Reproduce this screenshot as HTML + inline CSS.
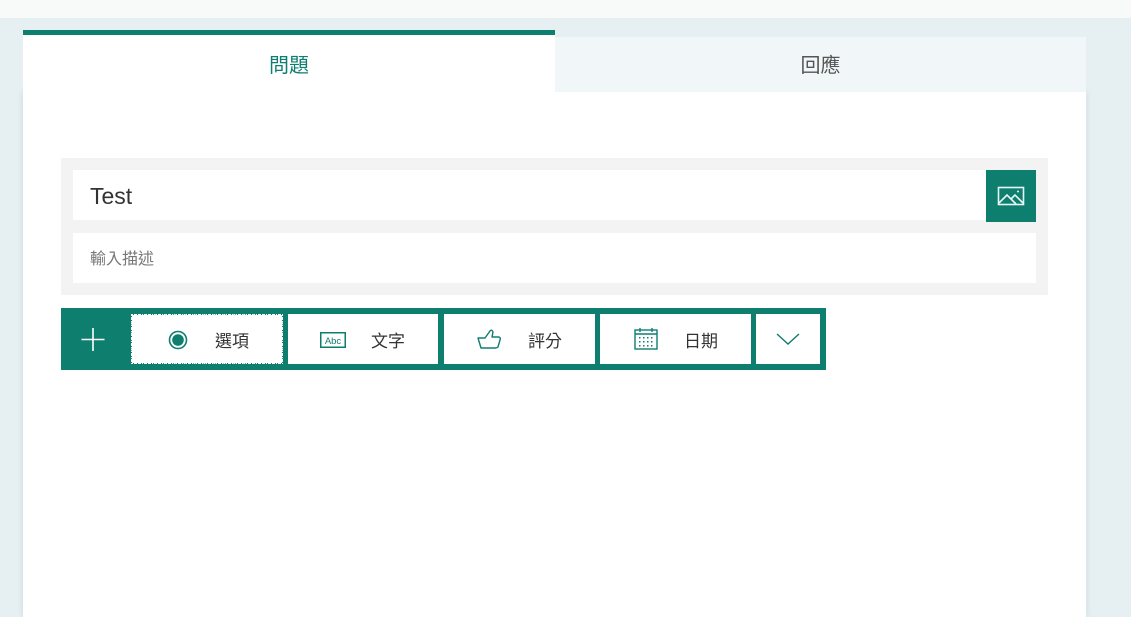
<!DOCTYPE html>
<html><head><meta charset="utf-8"><style>
*{margin:0;padding:0;box-sizing:border-box}
body{width:1131px;height:617px;overflow:hidden;background:#e6f0f2;font-family:"Liberation Sans","Noto Sans CJK TC",sans-serif;position:relative}
.top{position:absolute;left:0;top:0;width:1131px;height:18px;background:#f8f9f9}
.panel{position:absolute;left:23px;top:92px;width:1063px;height:525px;background:#fff;box-shadow:0 0 6px rgba(0,60,80,.12)}
.tab1{position:absolute;left:23px;top:30px;width:532px;height:62px;background:#fff;border-top:5px solid #0e7e6f;color:#0e7e6f;font-size:20px;text-align:center;line-height:62px}
.tab2{position:absolute;left:555px;top:37px;width:531px;height:55px;background:#f1f7f8;color:#555;font-size:20px;text-align:center;line-height:58px}
.gbox{position:absolute;left:61px;top:158px;width:987px;height:137px;background:#f3f3f3}
.title{position:absolute;left:73px;top:170px;width:913px;height:50px;background:#fff;font-size:23px;color:#333;line-height:52px;padding-left:17px}
.imgb{position:absolute;left:986px;top:170px;width:50px;height:52px;background:#0e7e6f}
.desc{position:absolute;left:73px;top:233px;width:963px;height:50px;background:#fff;font-size:16px;color:#777;line-height:53px;padding-left:17px}
.bar{position:absolute;left:61px;top:308px;width:765px;height:62px;background:#0e7e6f}
.btn{position:absolute;top:314px;height:50px;background:#fff;font-size:17px;color:#333;display:flex;align-items:center}
.btn svg{position:absolute}
.btn span{position:absolute}
</style></head><body>
<div class="top"></div>
<div class="panel"></div>
<div class="tab1">問題</div>
<div class="tab2">回應</div>
<div class="gbox"></div>
<div class="title">Test</div>
<div class="imgb"><svg width="50" height="52" viewBox="0 0 50 52"><rect x="12.5" y="17.5" width="25" height="17" fill="none" stroke="#e8f8f5" stroke-width="1.6"/><path d="M13 33 L21 25 L30 34 M25 29 L29 25 L37 33" fill="none" stroke="#e8f8f5" stroke-width="1.6"/><circle cx="32" cy="21.5" r="1" fill="#e8f8f5"/></svg></div>
<div class="desc">輸入描述</div>
<div class="bar"><svg width="65" height="62" style="position:absolute;left:0;top:0"><path d="M32 20V43M20.5 31.5H43.5" stroke="#fff" stroke-width="1.6"/></svg></div>
<div class="btn" style="left:131px;width:152px;border:1px dashed #0e7e6f;outline:1px dotted #fff;outline-offset:-1px"><svg style="left:36px;top:15px" width="20" height="20"><circle cx="10" cy="10" r="8.5" fill="none" stroke="#0e7e6f" stroke-width="1.6"/><circle cx="10" cy="10" r="5.8" fill="#0e7e6f"/></svg><span style="left:83px">選項</span></div>
<div class="btn" style="left:288px;width:150px"><svg style="left:32px;top:18px" width="26" height="16"><rect x="0.75" y="0.75" width="24.5" height="14.5" fill="none" stroke="#0e7e6f" stroke-width="1.5"/><text x="13" y="12" font-size="9.5" text-anchor="middle" fill="#0e7e6f" font-family="Liberation Sans">Abc</text></svg><span style="left:83px">文字</span></div>
<div class="btn" style="left:444px;width:151px"><svg style="left:33px;top:14px" width="26" height="22"><path d="M1 10H8 L13 3 Q15 1 16 4 L15 9 H22 Q24 10 23 12 L21 19 Q20 20 18 20 H4 Z" fill="none" stroke="#0e7e6f" stroke-width="1.4" stroke-linejoin="round"/></svg><span style="left:84px">評分</span></div>
<div class="btn" style="left:600px;width:151px"><svg style="left:34px;top:13px" width="24" height="24"><rect x="1" y="3" width="22" height="19" fill="none" stroke="#0e7e6f" stroke-width="1.4"/><path d="M1 7H23M6 1V5M18 1V5" stroke="#0e7e6f" stroke-width="1.4"/><g fill="#0e7e6f"><rect x="5" y="10" width="1.5" height="1.5"/><rect x="9" y="10" width="1.5" height="1.5"/><rect x="13" y="10" width="1.5" height="1.5"/><rect x="17" y="10" width="1.5" height="1.5"/><rect x="5" y="14" width="1.5" height="1.5"/><rect x="9" y="14" width="1.5" height="1.5"/><rect x="13" y="14" width="1.5" height="1.5"/><rect x="17" y="14" width="1.5" height="1.5"/><rect x="5" y="18" width="1.5" height="1.5"/><rect x="9" y="18" width="1.5" height="1.5"/><rect x="13" y="18" width="1.5" height="1.5"/><rect x="17" y="18" width="1.5" height="1.5"/></g></svg><span style="left:84px">日期</span></div>
<div class="btn" style="left:756px;width:64px"><svg style="left:20px;top:18px" width="24" height="14"><path d="M1 2L12 12L23 2" fill="none" stroke="#0e7e6f" stroke-width="1.4"/></svg></div>
</body></html>
